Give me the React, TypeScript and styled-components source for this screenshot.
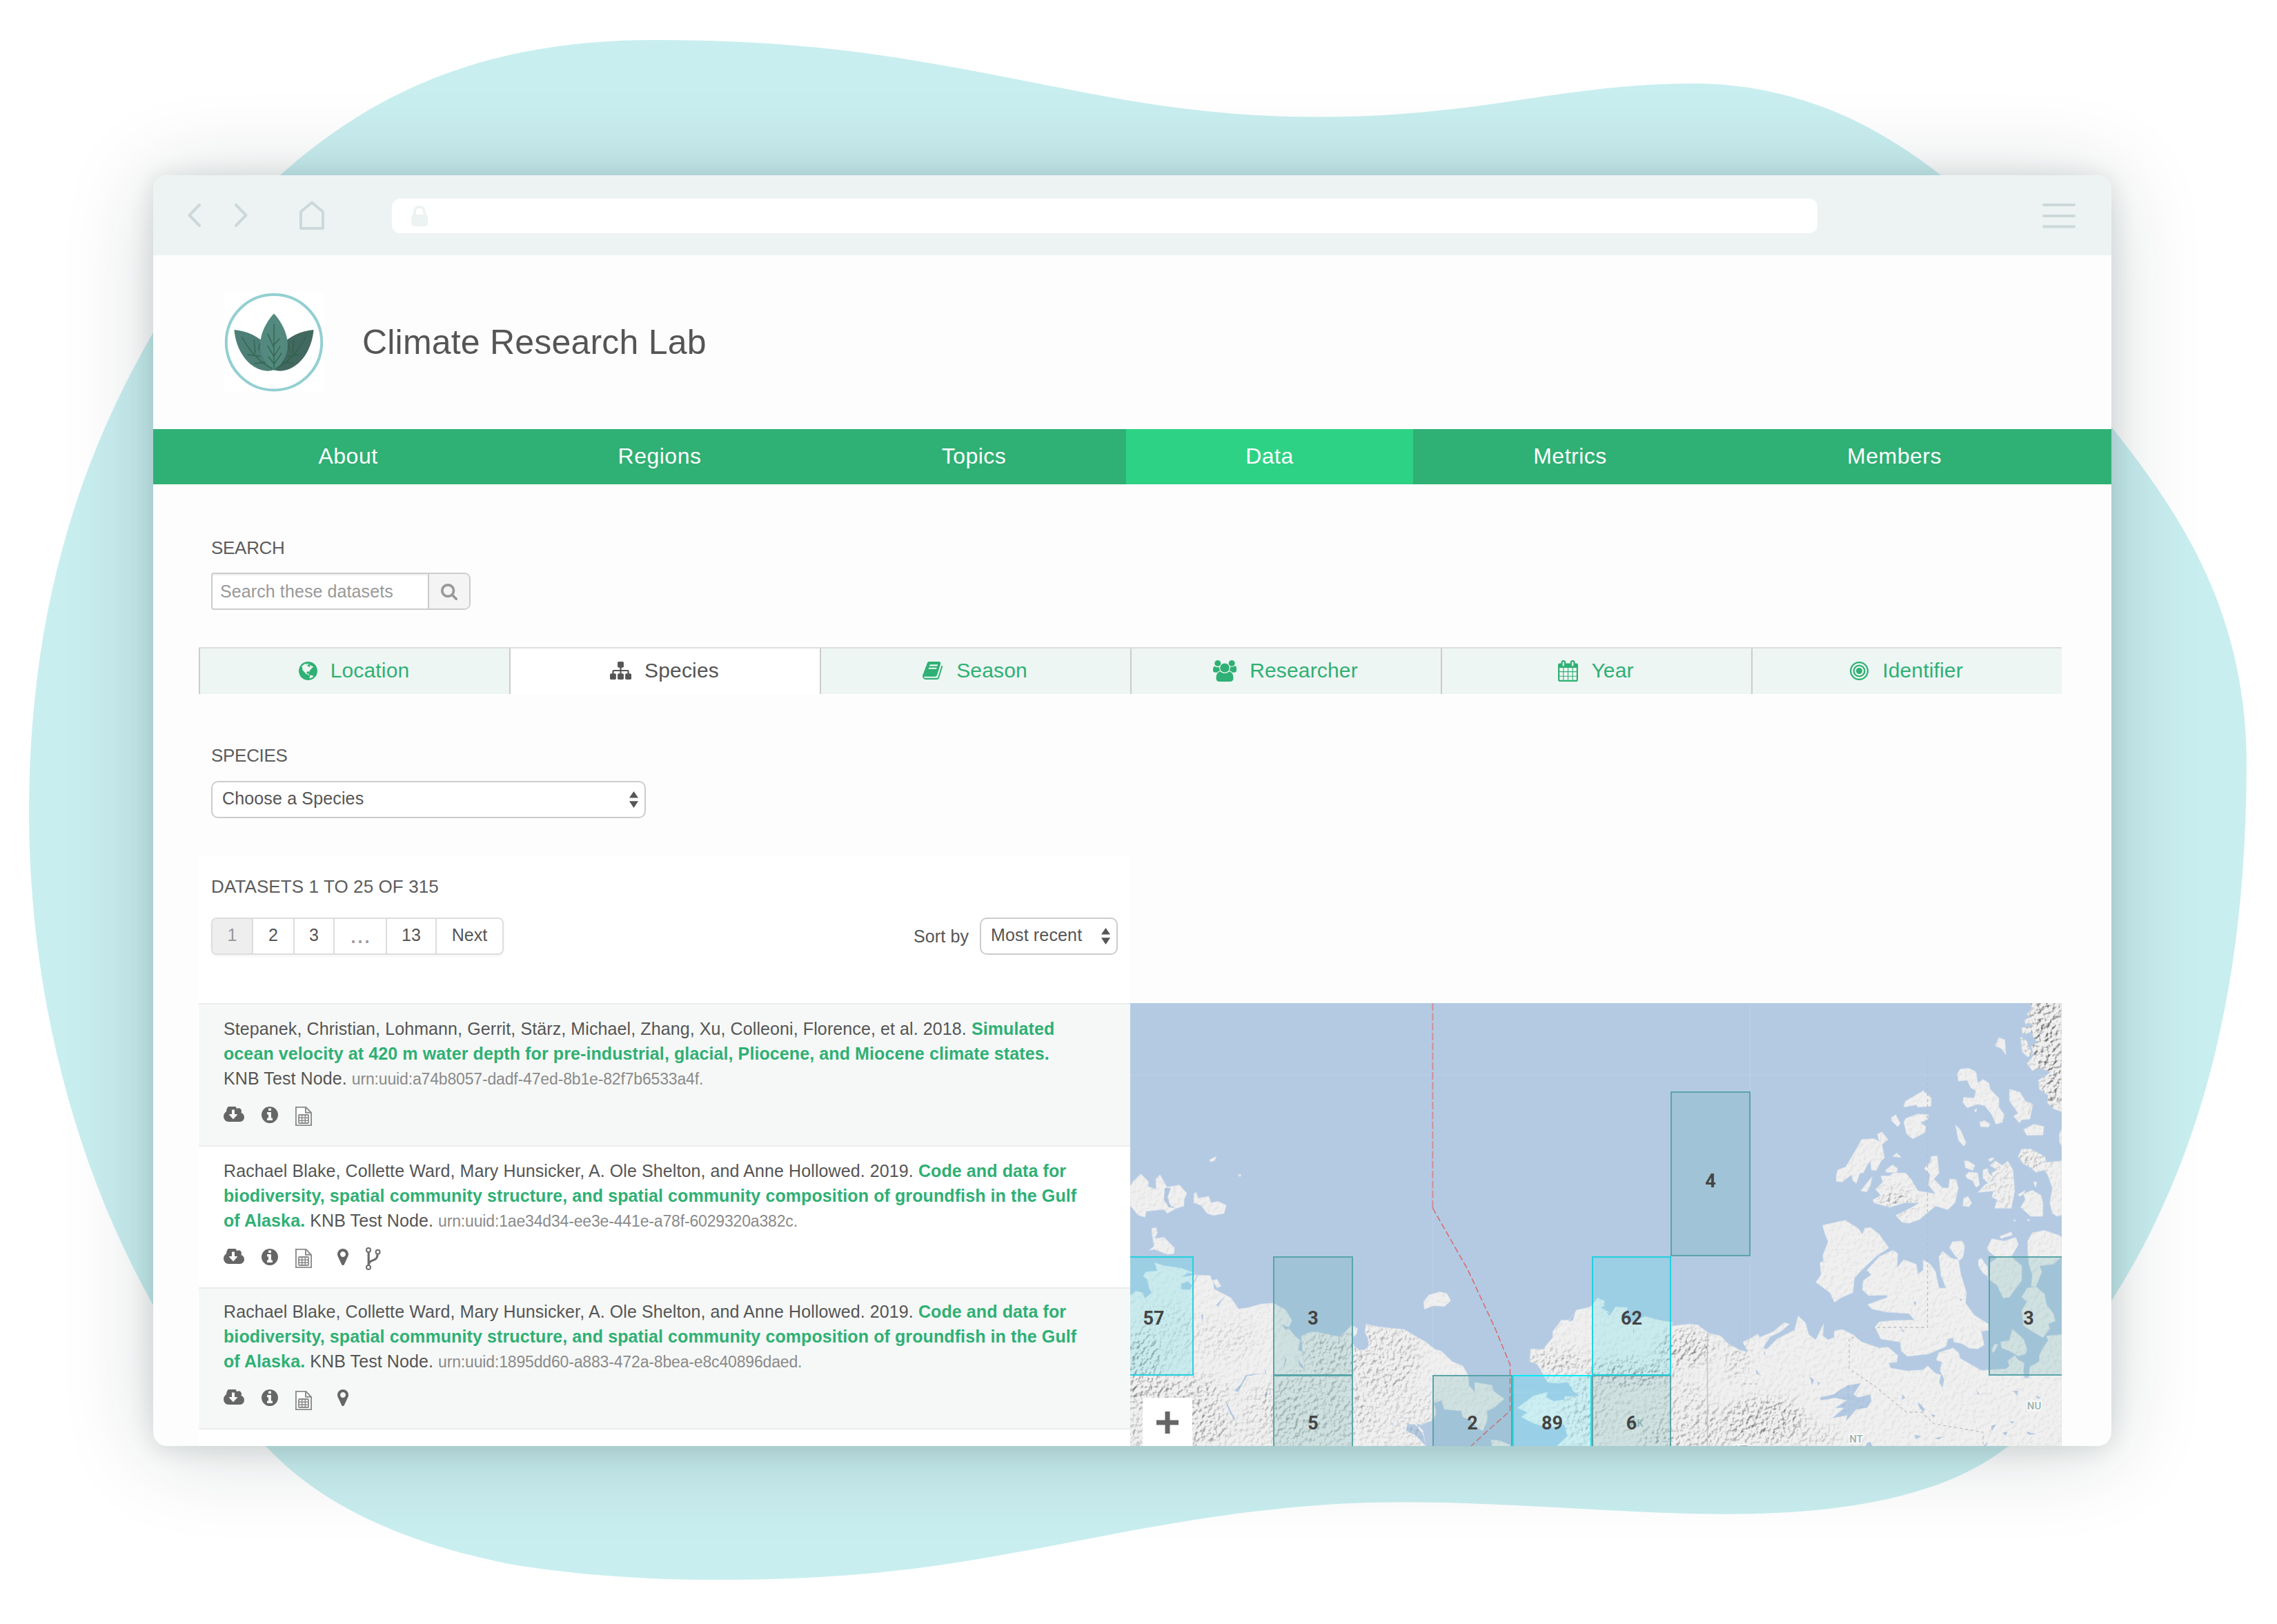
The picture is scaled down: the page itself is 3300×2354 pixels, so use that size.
import React from "react";
import styled, { createGlobalStyle } from "styled-components";

const GREEN = "#2fb074";
const TEXT = "#555555";

const Global = createGlobalStyle`
  *, *::before, *::after { box-sizing: border-box; }
  html, body { margin: 0; padding: 0; background: #fff; }
  body { font-family: "Liberation Sans", Arial, Helvetica, sans-serif; color: ${TEXT}; }
`;

/* ---------- page shell ---------- */

const Stage = styled.div`
  position: relative;
  width: 3300px;
  height: 2354px;
  padding: 254px 240px 258px 222px;
  overflow: hidden;
  background: #fff;
`;

const Backdrop = styled.svg`
  position: absolute;
  inset: 0;
  width: 3300px;
  height: 2354px;
`;

const BrowserWindow = styled.main`
  position: relative;
  width: 2838px;
  height: 1842px;
  border-radius: 20px;
  background: #fdfdfd;
  box-shadow: 0 8px 130px rgba(10, 35, 40, 0.18), 0 3px 36px rgba(10, 30, 35, 0.12);
`;

const WindowClip = styled.div`
  width: 100%;
  height: 100%;
  display: flex;
  flex-direction: column;
  border-radius: 20px;
  overflow: hidden;
`;

const Toolbar = styled.header`
  flex: none;
  height: 116px;
  padding: 0 51px 0 50px;
  display: flex;
  align-items: center;
  background: #edf3f3;
`;

const ToolbarIcon = styled.svg<{ $gap: number }>`
  flex: none;
  margin-right: ${(p) => p.$gap}px;
  fill: none;
  stroke: #ccd8da;
  stroke-width: 4;
  stroke-linecap: round;
  stroke-linejoin: round;
`;

const AddressBar = styled.div`
  width: 2066px;
  height: 50px;
  margin-right: auto;
  margin-top: 2px;
  padding-left: 28px;
  display: flex;
  align-items: center;
  border-radius: 12px;
  background: #fff;
`;

const Masthead = styled.div`
  flex: none;
  height: 252px;
  padding-left: 102px;
  display: flex;
  align-items: center;
`;

const LogoTile = styled.div`
  width: 146px;
  height: 144px;
  background: #fff;
`;

const SiteTitle = styled.h1`
  margin: 0 0 0 55px;
  font-size: 50px;
  line-height: 60px;
  font-weight: 400;
  letter-spacing: 0.2px;
`;

const Nav = styled.nav`
  flex: none;
  height: 80px;
  padding-left: 66px;
  display: flex;
  background: ${GREEN};
`;

const NavItem = styled.a<{ $width: number; $active?: boolean }>`
  width: ${(p) => p.$width}px;
  display: flex;
  align-items: center;
  justify-content: center;
  padding-bottom: 2px;
  font-size: 32px;
  letter-spacing: 0.5px;
  color: #fff;
  background: ${(p) => (p.$active ? "#2dd284" : "transparent")};
`;

const Content = styled.section`
  flex: 1;
  min-height: 0;
  padding: 77px 72px 0 66px;
`;

/* ---------- form parts ---------- */

const Caption = styled.h2<{ $top?: number; $track?: number }>`
  margin: ${(p) => p.$top ?? 0}px 0 0 18px;
  height: 30px;
  font-size: 26px;
  line-height: 30px;
  font-weight: 400;
  letter-spacing: ${(p) => p.$track ?? -0.3}px;
  text-transform: uppercase;
  color: #5c5c5c;
`;

const SearchBox = styled.div`
  width: 376px;
  height: 54px;
  margin: 21px 0 54px 18px;
  display: flex;
  border: 2px solid #ccc;
  border-radius: 4px 9px 9px 4px;
  overflow: hidden;
  background: #fff;
`;

const SearchInput = styled.div`
  width: 312px;
  padding-left: 11px;
  line-height: 50px;
  font-size: 25px;
  letter-spacing: 0.1px;
  color: #999;
  box-shadow: inset 0 2px 2px rgba(0, 0, 0, 0.07);
`;

const SearchButton = styled.div`
  flex: 1;
  display: flex;
  align-items: center;
  justify-content: center;
  padding-top: 2px;
  border-left: 2px solid #ccc;
  background: #f4f4f4;
  color: #999;
`;

const Tabs = styled.div`
  width: 2700px;
  height: 68px;
  display: grid;
  grid-template-columns: repeat(6, 450px);
  border-top: 2px solid #ddd;
`;

const Tab = styled.a<{ $active?: boolean; $gap: number }>`
  display: flex;
  align-items: center;
  justify-content: center;
  gap: ${(p) => p.$gap}px;
  padding: 0 2px 2px 0;
  border-left: 2px solid #ccc;
  font-size: 30px;
  letter-spacing: 0.15px;
  color: ${(p) => (p.$active ? TEXT : GREEN)};
  background: ${(p) => (p.$active ? "#fff" : "#eef6f3")};
`;

const Select = styled.div<{ $width: number }>`
  width: ${(p) => p.$width}px;
  height: 54px;
  padding: 0 9px 0 14px;
  display: flex;
  align-items: center;
  justify-content: space-between;
  border: 2px solid #ccc;
  border-radius: 10px;
  background: #fff;
  font-size: 25px;
`;

const SelectLabel = styled.span`
  padding-bottom: 3px;
  letter-spacing: 0.15px;
`;

const SpeciesField = styled.div`
  margin: 22px 0 54px 18px;
`;

/* ---------- results ---------- */

const Results = styled.div`
  display: grid;
  grid-template-columns: 1350px 1350px;
`;

const ListPanel = styled.div`
  height: 856px;
  padding-top: 30px;
  border-radius: 8px 8px 0 0;
  background: #fff;
`;

const ListTools = styled.div`
  height: 54px;
  margin: 30px 18px 70px;
  display: flex;
  align-items: center;
  justify-content: space-between;
`;

const Pager = styled.div`
  height: 54px;
  display: flex;
  border: 2px solid #ddd;
  border-radius: 8px;
  overflow: hidden;
  box-shadow: 0 2px 4px rgba(0, 0, 0, 0.05);
`;

const Page = styled.a<{ $width: number; $current?: boolean }>`
  width: ${(p) => p.$width}px;
  display: flex;
  align-items: center;
  justify-content: center;
  padding-bottom: 4px;
  font-size: 25px;
  color: ${(p) => (p.$current ? "#999" : TEXT)};
  background: ${(p) => (p.$current ? "#eee" : "#fff")};
  & + & { border-left: 2px solid #ddd; }
`;

const Dots = styled.span`
  font-size: 36px;
  line-height: 30px;
  color: #999;
`;

const SortBy = styled.label`
  display: flex;
  align-items: center;
  gap: 16px;
  font-size: 25px;
  letter-spacing: 0.1px;
`;

const Row = styled.article<{ $shaded?: boolean; $height: number; $pad: number }>`
  height: ${(p) => p.$height}px;
  padding: ${(p) => p.$pad}px 0 0 36px;
  border-top: 2px solid #ebeeed;
  background: ${(p) => (p.$shaded ? "#f6f8f7" : "#fff")};
`;

const Citation = styled.p`
  margin: 0;
  font-size: 25px;
  line-height: 36px;
  letter-spacing: 0.1px;
  white-space: nowrap;
`;

const Line = styled.span`
  display: block;
  height: 36px;
`;

const TitleLink = styled.a`
  font-weight: 700;
  color: ${GREEN};
`;

const Uuid = styled.span`
  font-size: 23px;
  letter-spacing: -0.16px;
  color: #8a8a8a;
`;

const Actions = styled.div`
  display: flex;
  align-items: flex-start;
  margin-top: 23px;
  color: #666;
`;

const ActionSlot = styled.span<{ $width: number; $drop?: number }>`
  width: ${(p) => p.$width}px;
  padding-top: ${(p) => p.$drop ?? 0}px;
  display: flex;
`;

const ForkSlot = styled(ActionSlot)`
  margin-top: -2px;
`;

const ListEnd = styled.div`
  height: 26px;
  border-top: 2px solid #ebeeed;
`;

/* ---------- map ---------- */

const MapFrame = styled.div`
  position: relative;
  width: 1350px;
  height: 642px;
  margin-top: 214px;
  overflow: hidden;
  background: #b4cae3;
  font-family: Roboto, "Liberation Sans", sans-serif;
`;

const MapArt = styled.svg`
  display: block;
  width: 1350px;
  height: 642px;
`;

type Tone = "teal" | "cyan" | "bright";
const toneFill = { teal: "rgba(89,169,172,.21)", cyan: "rgba(80,222,233,.24)", bright: "rgba(40,235,250,.19)" };
const toneLine = { teal: "#59a5a9", cyan: "#22d0de", bright: "#06e9f4" };

const GridCell = styled.div<{ $x: number; $y: number; $w: number; $h: number; $tone: Tone; $text: number }>`
  position: absolute;
  left: ${(p) => p.$x}px;
  top: ${(p) => p.$y}px;
  width: ${(p) => p.$w}px;
  height: ${(p) => p.$h}px;
  padding-top: ${(p) => p.$text}px;
  border: 2px solid ${(p) => toneLine[p.$tone]};
  background: ${(p) => toneFill[p.$tone]};
  text-align: center;
  font-size: 27px;
  line-height: 30px;
  font-weight: 700;
  color: #444;
`;

const ZoomIn = styled.div`
  position: absolute;
  left: 18px;
  top: 572px;
  width: 72px;
  height: 72px;
  display: flex;
  align-items: center;
  justify-content: center;
  border-radius: 4px;
  background: #fff;
`;

/* ---------- icons ---------- */

const glyphs: Record<string, { box: string; d: string }> = {
  search: {
    box: "64 128 1664 1664",
    d: "M1216 832q0-185-131.5-316.5t-316.5-131.5-316.5 131.5-131.5 316.5 131.5 316.5 316.5 131.5 316.5-131.5 131.5-316.5zm512 832q0 52-38 90t-90 38q-54 0-90-38l-343-342q-179 124-399 124-143 0-273.5-55.5t-225-150-150-225-55.5-273.5 55.5-273.5 150-225 225-150 273.5-55.5 273.5 55.5 225 150 150 225 55.5 273.5q0 220-124 399l343 343q37 37 37 90z",
  },
  globe: {
    box: "128 128 1536 1536",
    d: "M896 128q209 0 385.5 103t279.5 279.5 103 385.5-103 385.5-279.5 279.5-385.5 103-385.5-103-279.5-279.5-103-385.5 103-385.5 279.5-279.5 385.5-103zm274 521q-2 1-9.5 9.5t-13.5 9.5q2 0 4.5-5t5-11 3.5-7q6-7 22-15 14-6 52-12 34-8 51 11-2-2 9.5-13t14.5-12q3-2 15-4.5t15-7.5l2-22q-12 1-17.5-7t-6.5-21q0 2-6 8 0-7-4.5-8t-11.5 1-9 1q-10-3-15-7.5t-8-16.5-4-15q-2-5-9.5-11t-9.5-10q-1-2-2.5-5.5t-3-6.5-4-5.5-5.5-2.5-7 5-7.5 10-4.5 5q-3-2-6-1.5t-4.5 1-4.5 3-5 3.5q-3 2-8.5 3t-8.5 2q15-5-1-11-10-4-16-3 9-4 7.5-12t-8.5-14h5q-1-4-8.5-8.5t-17.5-8.5-13-6q-8-5-34-9.5t-33-.5q-5 6-4.5 10.5t4 14 3.5 12.5q1 6-5.5 13t-6.5 12q0 7 14 15.5t10 21.5q-3 8-16 16t-16 12q-5 8-1.5 18.5t10.5 16.5q2 2 1.5 4t-3.5 4.5-5.5 4-6.5 3.5l-3 2q-11 5-20.5-6t-13.5-26q-7-25-16-30-23-8-29 1-5-13-41-26-25-9-58-4 6-1 0-15-7-15-19-12 3-6 4-17.5t1-13.5q3-13 12-23 1-1 7-8.5t9.5-13.5.5-6q35 4 50-11 5-5 11.5-17t10.5-17q9-6 14-5.5t14.5 5.5 14.5 5q14 1 15.5-11t-7.5-20q12 1 3-17-4-7-8-9-12-4-27 5-8 4 2 8-1-1-9.5 10.5t-16.5 17.5-16-5q-1-1-5.5-13.5t-9.5-13.5q-8 0-16 15 3-8-11-15t-24-8q19-12-8-27-7-4-20.5-5t-19.5 4q-5 7-5.5 11.5t5 8 10.5 5.5 11.5 4 8.5 3q14 10 8 14-2 1-8.5 3.5t-11.5 4.5-6 4q-3 4 0 14t-2 14q-5-5-9-17.5t-7-16.5q7 9-25 6l-10-1q-4 0-16 2t-20.5 1-13.5-8q-4-8 0-20 1-4 4-2-4-3-11-9.5t-10-8.5q-46 15-94 41 6 1 12-1 5-2 13-6.5t10-5.5q34-14 42-7l5-5q14 16 20 25-7-4-30-1-20 6-22 12 7 12 5 18-4-3-11.5-10t-14.5-11-15-5q-16 0-22 1-146 80-235 222 7 7 12 8 4 1 5 9t2.5 11 11.5-3q9 8 3 19 1-1 44 27 19 17 21 21 3 11-10 18-1-2-9-9t-9-4q-3 5 .5 18.5t10.5 12.5q-7 0-9.5 16t-2.5 35.5-1 23.5l2 1q-3 12 5.5 34.5t21.5 19.5q-13 3 20 43 6 8 8 9 3 2 12 7.5t15 10 10 10.5q4 5 10 22.5t14 23.5q-2 6 9.5 20t10.5 23q-1 0-2.5 1t-2.5 1q3 7 15.5 14t15.5 13q1 3 2 10t3 11 8 2q2-20-24-62-15-25-17-29-3-5-5.5-15.5t-4.5-14.5q2 0 6 1.5t8.5 3.5 7.5 4 2 3q-3 7 2 17.5t12 18.5 17 19 12 13q6 6 14 19.5t0 13.5q9 0 20 10.5t17 19.5q5 8 8 26t5 24q2 7 8.5 13.5t12.5 9.5l16 8 13 7q5 2 18.5 10.5t21.5 11.5q10 4 16 4t14.5-2.5 13.5-3.5q15-2 29 15t21 21q36 19 55 11-2 1 .5 7.5t8 15.5 9 14.5 5.5 8.5q5 6 18 15t18 15q6-4 7-9-3 8 7 20t18 10q14-3 14-32-31 15-49-18 0-1-2.5-5.5t-4-8.5-2.5-8.5 0-7.5 5-3q9 0 10-3.5t-2-12.5-4-13q-1-8-11-20t-12-15q-5 9-16 8t-16-9q0 1-1.5 5.5t-1.5 6.5q-13 0-15-1 1-3 2.5-17.5t3.5-22.5q1-4 5.5-12t7.5-14.5 4-12.5-4.5-9.5-17.5-2.5q-19 1-26 20-1 3-3 10.5t-5 11.5-9 7q-7 3-24 2t-24-5q-13-8-22.5-29t-9.5-37q0-10 2.5-26.5t3-25-5.5-24.5q3-2 9-9.5t10-10.5q2-1 4.5-1.5t4.5 0 4-1.5 3-6q-1-1-4-3-3-3-4-3 7 3 28.5-1.5t27.5 1.5q15 11 22-2 0-1-2.5-9.5t-.5-13.5q5 27 29 9 3 3 15.5 5t17.5 5q3 2 7 5.5t5.5 4.5 5-.5 8.5-6.5q10 14 12 24 11 40 19 44 7 3 11 2t4.5-9.5 0-14-1.5-12.5l-1-8v-18l-1-8q-15-3-18.5-12t1.5-18.5 15-18.5q1-1 8-3.5t15.5-6.5 12.5-8q21-19 15-35 7 0 11-9-1 0-5-3t-7.5-5-4.5-2q9-5 2-16 5-3 7.5-11t7.5-10q9 12 21 2 8-8 1-16 5-7 20.5-10.5t18.5-9.5q7 2 8-2t1-12 3-12q4-5 15-9t13-5l17-11q3-4 0-4 18 2 31-11 10-11-6-20 3-6-3-9.5t-15-5.5q3-1 11.5-.5t10.5-1.5q15-10-7-16-17-5-43 12zm-163 877q206-36 351-189-3-3-12.5-4.5t-12.5-3.5q-18-7-24-8 1-7-2.5-13t-8-9-12.5-8-11-7q-2-2-7-6t-7-5.5-7.5-4.5-8.5-2-10 1l-3 1q-3 1-5.5 2.5t-5.5 3-4 3 0 2.5q-21-17-36-22-5-1-11-5.5t-10.5-7-10-1.5-11.5 7q-5 5-6 15t-2 13q-7-5 0-17.5t2-18.5q-3-6-10.5-4.5t-12 4.5-11.5 8.5-9 6.5-8.5 5.5-8.5 7.5q-3 4-6 12t-5 11q-2-4-11.5-6.5t-9.5-5.5q2 10 4 35t5 38q7 31-12 48-27 25-29 40-4 22 12 26 0 7-8 20.5t-7 21.5q0 6 2 16z",
  },
  sitemap: {
    box: "0 128 1792 1536",
    d: "M1792 1248v320q0 40-28 68t-68 28h-320q-40 0-68-28t-28-68v-320q0-40 28-68t68-28h96v-192h-512v192h96q40 0 68 28t28 68v320q0 40-28 68t-68 28h-320q-40 0-68-28t-28-68v-320q0-40 28-68t68-28h96v-192h-512v192h96q40 0 68 28t28 68v320q0 40-28 68t-68 28h-320q-40 0-68-28t-28-68v-320q0-40 28-68t68-28h96v-192q0-52 38-90t90-38h512v-192h-96q-40 0-68-28t-28-68v-320q0-40 28-68t68-28h320q40 0 68 28t28 68v320q0 40-28 68t-68 28h-96v192h512q52 0 90 38t38 90v192h96q40 0 68 28t28 68z",
  },
  book: {
    box: "64 128 1664 1536",
    d: "M1703 478q40 57 18 129l-275 906q-19 64-76.5 107.5t-122.5 43.5h-923q-77 0-148.5-53.5t-99.5-131.5q-24-67-2-127 0-4 3-27t4-37q1-8-3-21.5t-3-19.5q2-11 8-21t16.5-23.5 16.5-23.5q23-38 45-91.5t30-91.5q3-10 .5-30t-.5-28q3-11 17-28t17-23q21-36 42-92t25-90q1-9-2.5-32t.5-28q4-13 22-30.5t22-22.5q19-26 42.5-84.5t27.5-96.5q1-8-3-25.5t-2-26.5q2-8 9-18t18-23 17-21q8-12 16.5-30.5t15-35 16-36 19.5-32 26.5-23.5 36-11.5 47.5 5.5l-1 3q38-9 51-9h761q74 0 114 56t18 130l-274 906q-36 119-71.5 153.5t-128.5 34.5h-869q-27 0-38 15-11 16-1 43 24 70 144 70h923q29 0 56-15.5t35-41.5l300-987q7-22 5-57 38 15 59 43zm-1064 2q-4 13 2 22.5t20 9.5h608q13 0 25.5-9.5t16.5-22.5l21-64q4-13-2-22.5t-20-9.5h-608q-13 0-25.5 9.5t-16.5 22.5zm-83 256q-4 13 2 22.5t20 9.5h608q13 0 25.5-9.5t16.5-22.5l21-64q4-13-2-22.5t-20-9.5h-608q-13 0-25.5 9.5t-16.5 22.5z",
  },
  users: {
    box: "64 0 1920 1792",
    d: "M657 896q-162 5-265 128h-134q-82 0-138-40.5t-56-118.5q0-353 124-353 6 0 43.5 21t97.5 42.5 119 21.5q67 0 133-23-5 37-5 66 0 159 93 293zm1071 637q0 120-73 189.5t-194 69.5h-874q-121 0-194-69.5t-73-189.5q0-53 3.5-103.5t14-109 26.5-108.5 43-97.5 62-81 85.5-53.5 111.5-20q10 0 43 21.5t73 48 107 48 135 21.5 135-21.5 107-48 73-48 43-21.5q61 0 111.5 20t85.5 53.5 62 81 43 97.5 26.5 108.5 14 109 3.5 103.5zm-1024-1277q0 106-75 181t-181 75-181-75-75-181 75-181 181-75 181 75 75 181zm704 384q0 159-112.5 271.5t-271.5 112.5-271.5-112.5-112.5-271.5 112.5-271.5 271.5-112.5 271.5 112.5 112.5 271.5zm576 225q0 78-56 118.5t-138 40.5h-134q-103-123-265-128 93-134 93-293 0-29-5-66 66 23 133 23 59 0 119-21.5t97.5-42.5 43.5-21q124 0 124 353zm-128-609q0 106-75 181t-181 75-181-75-75-181 75-181 181-75 181 75 75 181z",
  },
  calendar: {
    box: "64 0 1664 1792",
    d: "M192 1664h288v-288h-288v288zm352 0h320v-288h-320v288zm-352-352h288v-320h-288v320zm352 0h320v-320h-320v320zm-352-384h288v-288h-288v288zm736 736h320v-288h-320v288zm-384-736h320v-288h-320v288zm768 736h288v-288h-288v288zm-384-352h320v-320h-320v320zm-352-864v-288q0-13-9.5-22.5t-22.5-9.5h-64q-13 0-22.5 9.5t-9.5 22.5v288q0 13 9.5 22.5t22.5 9.5h64q13 0 22.5-9.5t9.5-22.5zm736 864h288v-320h-288v320zm-384-384h320v-288h-320v288zm384 0h288v-288h-288v288zm32-480v-288q0-13-9.5-22.5t-22.5-9.5h-64q-13 0-22.5 9.5t-9.5 22.5v288q0 13 9.5 22.5t22.5 9.5h64q13 0 22.5-9.5t9.5-22.5zm384-64v1280q0 52-38 90t-90 38h-1408q-52 0-90-38t-38-90v-1280q0-52 38-90t90-38h128v-96q0-66 47-113t113-47h64q66 0 113 47t47 113v96h384v-96q0-66 47-113t113-47h64q66 0 113 47t47 113v96h128q52 0 90 38t38 90z",
  },
  download: {
    box: "-64 256 1920 1280",
    d: "M1216 928q0-14-9-23t-23-9h-224v-352q0-13-9.5-22.5t-22.5-9.5h-192q-13 0-22.5 9.5t-9.5 22.5v352h-224q-13 0-22.5 9.5t-9.5 22.5q0 14 9 23l352 352q9 9 23 9t23-9l351-351q10-12 10-24zm640 224q0 159-112.5 271.5t-271.5 112.5h-1088q-185 0-316.5-131.5t-131.5-316.5q0-130 70-240t188-165q-2-30-2-43 0-212 150-362t362-150q156 0 285.5 87t188.5 231q71-62 166-62 106 0 181 75t75 181q0 76-41 138 130 31 213.5 135.5t83.5 238.5z",
  },
  info: {
    box: "128 128 1536 1536",
    d: "M1152 1376v-160q0-14-9-23t-23-9h-96v-512q0-14-9-23t-23-9h-320q-14 0-23 9t-9 23v160q0 14 9 23t23 9h96v320h-96q-14 0-23 9t-9 23v160q0 14 9 23t23 9h448q14 0 23-9t9-23zm-128-896v-160q0-14-9-23t-23-9h-192q-14 0-23 9t-9 23v160q0 14 9 23t23 9h192q14 0 23-9t9-23zm640 416q0 209-103 385.5t-279.5 279.5-385.5 103-385.5-103-279.5-279.5-103-385.5 103-385.5 279.5-279.5 385.5-103 385.5 103 279.5 279.5 103 385.5z",
  },
  marker: {
    box: "384 128 1024 1536",
    d: "M1152 640q0-106-75-181t-181-75-181 75-75 181 75 181 181 75 181-75 75-181zm256 0q0 109-33 179l-364 774q-16 33-47.5 52t-67.5 19-67.5-19-46.5-52l-365-774q-33-70-33-179 0-212 150-362t362-150 362 150 150 362z",
  },
};

const Glyph = ({ name, w, h }: { name: string; w: number; h: number }) => (
  <svg width={w} height={h} viewBox={glyphs[name].box} fill="currentColor" preserveAspectRatio="none">
    <path d={glyphs[name].d} />
  </svg>
);

const Bullseye = () => (
  <svg width="27" height="27" viewBox="0 0 1536 1536" fill="none" stroke="currentColor" strokeWidth="128">
    <circle cx="768" cy="768" r="704" />
    <circle cx="768" cy="768" r="448" />
    <circle cx="768" cy="768" r="256" fill="currentColor" stroke="none" />
  </svg>
);

const FileTable = () => (
  <svg width="24" height="28" viewBox="0 0 24 28" fill="none" stroke="#8a8a8a" strokeWidth="1.9">
    <path d="M.9.9H15.4L23.1 9V27.1H.9z" fill="#fdfdfd" />
    <path d="M15 .9V8.8H23" />
    <rect x="5" y="12" width="14" height="12" rx="1" strokeWidth="1.8" />
    <path d="M5 16.200H19M5 20.200H19M9.700 12V24M14.300 12V24" strokeWidth="1.500" />
  </svg>
);

const Fork = () => (
  <svg width="22" height="33" viewBox="0 0 22 33" fill="none" stroke="#6c6c6c">
    <circle cx="4" cy="4" r="3" strokeWidth="2" />
    <circle cx="17.600" cy="6.800" r="3" strokeWidth="2" />
    <circle cx="4" cy="29" r="3" strokeWidth="2" />
    <path d="M4.200 7.600V25.500M17.200 10.400C16.800 17 13 18.400 9.500 19.200C6.500 20 5 21.400 4.400 24.500" strokeWidth="3.200" />
  </svg>
);

const UpDown = () => (
  <svg width="13" height="24" viewBox="0 0 13 24" fill="#555">
    <path d="M6.500 0L13 9.600H0zM6.500 24L0 14.200H13z" />
  </svg>
);

const Logo = () => (
  <svg width="146" height="144" viewBox="0 0 146 144">
    <circle cx="73" cy="72.200" r="69.200" fill="none" stroke="#93cfd1" strokeWidth="4" />
    <path d="M15.500 54C34 55.500 52 64 64 78C74 90 77 103 73 112C66 115 55 114 45 108C28 98 17 76 15.500 54Z" fill="#4d7f77" />
    <path d="M130.500 54C112 55.500 94 64 82 78C72 90 69 103 73 112C80 115 91 114 101 108C118 98 129 76 130.500 54Z" fill="#42695f" />
    <path d="M73 30.500C84 42 93 60 93 76C93 92 84 105 73 112.500C62 105 53 92 53 76C53 60 62 42 73 30.500Z" fill="#53897e" />
    <g fill="none" stroke="#2d6147" strokeWidth="1.400" strokeLinecap="round" opacity=".85">
      <path d="M73 46V112M73 80L64 60M73 76L81 67M73 93L64 77M73 93L82 78M73 103L65 93M73 104L84 88" />
      <path d="M27 65C36 82 50 100 70 110M46 88L44 69M53 92.500L35 90M60 101L45 103M51 84L52 74" />
      <path d="M119 65C110 82 96 100 76 110M100 88L102 69M93 92.500L111 90M86 101L101 103M95 84L94 74" />
    </g>
  </svg>
);

/* ---------- map drawing ---------- */

// Western half: Siberia, Wrangel Island and the Bering Strait.
const WEST = "translate(-18 -14) scale(.44643 .43368)";
const westLand = [
  "40,1010 58,995 80,1000 88,1020 110,1000 102,985 95,955 82,945 92,930 128,928 120,900 150,910 205,918 250,935 225,934 208,948 258,940 240,975 228,962 206,970 206,990 235,990 262,942 300,943 306,960 322,955 335,978 322,984 310,962 312,988 350,1008 368,1018 392,1055 425,1050 465,1038 505,1035 545,1058 565,1092 555,1115 530,1105 545,1125 555,1120 575,1145 592,1160 585,1190 600,1200 596,1145 625,1132 650,1132 720,1148 740,1130 760,1108 778,1120 775,1140 760,1150 768,1180 785,1192 800,1192 815,1178 812,1150 802,1135 806,1105 850,1115 930,1123 965,1145 1000,1165 1030,1190 1050,1195 1085,1230 1120,1245 1137,1275 1140,1310 1160,1335 1158,1300 1215,1310 1220,1330 1255,1355 1220,1385 1198,1395 1200,1425 1185,1462 1165,1450 1150,1430 1120,1415 1115,1395 1060,1390 1050,1360 1025,1370 1035,1400 1025,1425 985,1442 965,1435 990,1460 1000,1513 40,1513",
  "40,645 50,628 75,603 100,630 98,645 125,655 123,620 137,606 160,648 200,640 224,668 215,690 215,710 190,718 160,735 150,722 92,728 88,748 65,740 40,708",
  "247,670 255,665 260,685 295,678 303,700 325,695 352,708 345,735 310,742 290,735 270,708 247,700",
  "110,785 125,783 128,800 120,820 150,815 184,850 182,870 160,872 120,855 102,858 118,845 112,808",
  "298,556 320,545 315,558 300,563",
  "390,605 400,605 397,613",
  "993,1030 1010,1008 1045,997 1068,1003 1081,1027 1060,1046 1025,1044 995,1055",
  "1568,1028 1545,1046 1490,1058 1465,1092 1440,1092 1412,1130 1412,1150 1380,1190 1340,1188 1337,1230 1362,1240 1375,1262 1395,1300 1430,1303 1460,1298 1480,1330 1500,1345 1450,1348 1452,1358 1415,1363 1390,1350 1395,1333 1350,1345 1298,1385 1330,1400 1310,1415 1345,1435 1400,1452 1450,1440 1460,1480 1425,1513 1568,1513",
  "1212,1492 1240,1495 1275,1510 1270,1513 1215,1513",
];
const westWater = [
  "152,650 172,650 162,680 170,708 188,718 165,714 150,690",
  "1455,1312 1475,1315 1470,1338 1445,1334 1425,1325 1445,1322",
  "1485,1065 1478,1092 1462,1098",
  "270,1075 278,1072 275,1100",
  "350,1010 325,1045 318,1043",
  "415,1275 482,1268 420,1279 390,1332 378,1328 400,1305",
  "348,1360 360,1380 388,1438 365,1405",
  "475,1248 483,1275 478,1270",
  "548,1225 535,1260 545,1215",
  "585,1222 608,1258 590,1245",
  "940,1440 965,1440 990,1472 1000,1513 965,1475 935,1462",
  "885,1425 900,1452 890,1440",
  "925,1418 955,1418 930,1421",
  "490,1312 480,1355 478,1340",
];

// Eastern half: Alaska, Yukon and the Canadian Arctic islands.
const EAST = "translate(662 -14) scale(.5102 .43368)";
const eastLand = [
  "-3,1053 12,1045 30,1018 50,1028 48,1045 38,1050 70,1070 80,1048 115,1050 110,1068 95,1075 125,1100 165,1080 205,1092 243,1100 240,1112 290,1105 315,1108 345,1135 380,1145 400,1170 430,1190 458,1200 443,1165 470,1150 485,1138 490,1150 530,1130 560,1100 575,1105 550,1130 520,1148 500,1185 510,1190 540,1155 590,1125 600,1078 620,1100 630,1140 650,1158 672,1105 670,1145 685,1158 702,1150 703,1128 725,1123 755,1140 780,1165 830,1185 855,1182 883,1210 880,1232 857,1235 862,1252 910,1262 955,1258 968,1245 990,1270 1005,1275 1000,1300 1010,1318 1015,1290 1003,1260 1008,1232 992,1225 1000,1200 1040,1185 1055,1200 1060,1220 1090,1240 1120,1260 1150,1258 1200,1270 1240,1265 1243,1287 1255,1285 1258,1248 1285,1230 1285,1210 1295,1185 1310,1160 1305,1145 1348,1140 1348,1513 -3,1513",
  "1250,985 1275,980 1300,1005 1305,1040 1325,1070 1330,1095 1310,1105 1315,1120 1295,1150 1265,1130 1240,1110 1235,1060 1250,1030 1235,1015",
  "1252,860 1252,828 1265,800 1300,792 1340,808 1348,815 1348,880 1325,905 1285,910 1292,930 1275,980 1262,978 1265,940 1255,905",
  "1137,850 1150,820 1185,828 1218,815 1225,840 1205,880 1235,910 1235,960 1215,990 1200,1015 1182,1018 1165,975 1140,955 1145,900 1165,885 1140,860",
  "1172,812 1205,797 1208,808 1185,815 1178,820",
  "1112,890 1120,885 1138,915 1138,945 1125,935 1112,910",
  "1175,1165 1200,1160 1208,1122 1240,1155 1250,1190 1245,1205 1225,1212 1200,1195 1178,1185",
  "1150,1190 1158,1172 1168,1172 1158,1195 1152,1200",
  "1195,1228 1215,1210 1225,1225 1242,1235 1238,1275 1200,1270 1145,1258 1190,1255 1200,1245",
  "669,775 733,758 770,785 783,805 788,785 805,782 830,805 857,850 820,880 780,925 760,950 755,1000 725,1015 703,1032 690,1000 650,965 665,940 662,900 672,895 670,875 685,830 675,800",
  "795,925 830,880 870,858 883,870 880,918 900,890 935,905 940,938 955,925 955,890 975,905 990,930 1000,985 1020,985 1005,940 1000,880 1010,862 1035,885 1055,890 1062,940 1078,1000 1075,1035 1100,1075 1140,1105 1142,1125 1120,1130 1128,1175 1110,1188 1085,1185 1065,1170 1042,1165 1040,1150 1025,1155 1020,1180 970,1205 910,1213 893,1195 890,1165 835,1155 818,1115 830,1098 870,1093 930,1092 915,1070 850,1065 810,1055 797,1040 855,1015 850,1008 800,1010 782,990 785,960 808,940",
  "1030,850 1038,830 1065,827 1073,845 1068,880 1058,893 1045,875",
  "820,655 840,630 835,610 858,610 870,600 905,600 920,620 940,660 990,670 970,640 975,605 958,585 975,565 978,545 995,543 1000,600 985,620 1010,650 1028,650 1030,620 1048,622 1055,650 1045,700 1025,723 990,710 965,735 945,755 915,768 895,765 877,742 915,720 945,700 900,700 860,715 815,700 812,690 835,675",
  "848,590 868,573 882,585 880,598 850,598",
  "708,610 712,590 735,580 765,520 780,488 815,485 830,495 825,470 838,463 855,488 838,505 845,550 835,560 822,592 808,590 805,560 795,575 785,600 775,600 765,635 755,625 752,605 725,630 708,628",
  "777,660 810,612 805,640 795,663",
  "868,545 880,533 893,548",
  "900,375 905,360 955,325 978,350 977,377 940,380 935,372 902,380",
  "865,415 877,405 890,435 882,445 865,425",
  "900,430 905,418 940,403 970,405 968,420 948,432 962,445 960,465 925,486 908,470",
  "1047,440 1060,455 1077,500 1070,510 1055,490",
  "1052,270 1060,253 1085,250 1105,262 1110,300 1125,287 1142,300 1145,320 1170,350 1170,380 1185,405 1180,430 1162,437 1150,405 1130,375 1110,370 1080,382 1068,365 1070,347 1100,350 1105,325 1090,315 1080,290 1055,293",
  "1100,390 1107,385 1105,398",
  "1115,430 1130,425 1145,437 1140,447 1118,445",
  "1160,175 1170,147 1187,155 1190,205 1178,185",
  "1200,320 1230,330 1245,360 1267,370 1262,395 1258,420 1235,422 1228,433 1212,410 1225,400 1200,360",
  "1240,455 1270,437 1298,445 1295,473 1250,475",
  "1348,455 1342,470 1342,495 1348,510",
  "1257,32 1265,48 1250,70 1260,80 1243,88 1246,105 1262,100 1268,110 1235,115 1238,138 1262,128 1268,145 1280,165 1262,175 1268,200 1252,212 1236,195 1232,145 1250,160 1256,185 1270,205 1250,235 1265,258 1290,250 1318,262 1300,278 1282,290 1285,320 1310,340 1308,365 1325,385 1348,395 1348,32",
  "1150,680 1155,660 1110,665 1130,640 1155,625 1150,600 1165,590 1145,575 1160,560 1180,575 1195,560 1210,590 1215,660 1208,700 1205,718 1158,718 1165,690",
  "1072,560 1082,560 1102,575 1095,592 1075,582",
  "1075,608 1085,597 1110,600 1115,640 1105,648 1095,625 1080,618",
  "1125,590 1138,585 1140,600 1155,615 1140,635 1125,618",
  "1070,685 1082,678 1093,700 1085,713 1068,710",
  "1140,555 1150,549 1157,552 1145,562",
  "1232,715 1245,690 1240,670 1265,658 1290,675 1295,700 1295,745 1260,745",
  "1225,545 1235,520 1260,520 1300,545 1305,565 1348,560 1348,740 1335,745 1322,735 1315,700 1322,650 1310,610 1300,590 1275,598 1258,580 1240,570",
  "1225,672 1245,658 1240,672 1228,678",
  "1268,630 1278,630 1274,648",
  "1250,755 1258,757 1254,762",
  "1212,757 1217,757 1215,763",
];
const eastWater = [
  "662,1350 700,1340 740,1310 778,1303 757,1340 770,1350 805,1340 808,1362 795,1385 765,1390 735,1430 740,1410 696,1420 730,1385 705,1385 738,1360 705,1352 665,1360",
  "918,1050 925,1025 920,1042",
  "928,1030 936,1032 932,1045",
  "893,1120 902,1130 896,1132",
  "1058,1020 1064,1022 1062,1030",
  "478,1255 495,1280 482,1270",
  "632,1280 645,1292 640,1310",
  "655,1298 662,1300 658,1312",
  "940,1365 960,1390 955,1400 942,1380",
  "895,1340 905,1352 895,1358",
  "1105,1322 1116,1342 1110,1340",
  "1210,1328 1225,1328 1222,1345",
  "975,1405 990,1410 985,1418",
  "930,1475 950,1480 935,1490",
  "985,1488 1015,1480 1000,1490",
  "1148,1445 1162,1440 1150,1462",
  "1180,1468 1195,1465 1190,1478",
  "1248,1465 1276,1472 1255,1475",
  "1200,1430 1215,1430 1208,1438",
  "1275,1345 1290,1350 1280,1355",
  "795,1502 805,1498 810,1513 792,1513",
  "1140,1500 1125,1513 1132,1513",
  "510,1162 512,1180 506,1176",
  "503,1190 508,1212 503,1205",
  "297,1105 297,1130 294,1118",
  "133,1112 134,1138 131,1130",
  "55,1065 68,1068 65,1078",
];

// Soft patches where relief shading is strongest: cx, cy, rx, ry, strength.
const relief: [number, number, number, number, number][] = [
  [15, 530, 30, 50, 0.8], [75, 565, 70, 22, 0.7], [95, 615, 50, 35, 0.7], [10, 600, 30, 50, 0.5], [50, 480, 45, 40, 0.25], [140, 490, 50, 30, 0.2],
  [270, 590, 80, 55, 0.45], [290, 505, 40, 30, 0.55], [200, 600, 50, 50, 0.25], [370, 515, 50, 50, 0.5], [390, 600, 60, 50, 0.25],
  [615, 520, 50, 18, 0.6], [655, 590, 30, 50, 0.35], [725, 536, 65, 18, 0.9], [700, 600, 50, 40, 0.15], [805, 500, 40, 26, 0.85],
  [800, 600, 50, 50, 0.35], [880, 515, 14, 36, 0.55], [920, 605, 60, 32, 0.9], [850, 620, 50, 30, 0.4], [990, 630, 40, 20, 0.3],
  [770, 634, 30, 12, 0.8],
  [1110, 285, 24, 16, 0.7], [1325, 40, 26, 60, 1.2], [1340, 110, 14, 40, 1.2], [1310, 225, 26, 20, 0.5],
  [1265, 265, 26, 40, 0.2], [1325, 145, 24, 24, 0.5],
];

const polys = (list: string[]) => list.map((p) => <polygon key={p} points={p} />);

const Terrain = () => (
  <MapArt viewBox="0 0 1350 642">
    <defs>
      <g id="land">
        <g transform={WEST}>{polys(westLand)}</g>
        <g transform={EAST}>{polys(eastLand)}</g>
      </g>
      <mask id="landOnly" maskUnits="userSpaceOnUse" x="0" y="0" width="1350" height="642">
        <use href="#land" fill="#fff" />
      </mask>
      <filter id="soften" x="-30%" y="-30%" width="160%" height="160%">
        <feGaussianBlur stdDeviation="9" />
      </filter>
      <mask id="peaks" maskUnits="userSpaceOnUse" x="0" y="0" width="1350" height="642">
        <rect width="1350" height="642" fill="#fff" opacity=".09" />
        <g filter="url(#soften)" fill="#fff">
          {relief.map(([x, y, rx, ry, o]) => (
            <ellipse key={`${x}-${y}`} cx={x} cy={y} rx={rx} ry={ry} opacity={Math.min(1, o * 0.85)} />
          ))}
        </g>
      </mask>
      <filter id="hillshade" x="0" y="0" width="100%" height="100%" colorInterpolationFilters="sRGB">
        <feTurbulence type="fractalNoise" baseFrequency=".17 .15" numOctaves="2" seed="7" />
        <feColorMatrix values="0 0 0 0 0  0 0 0 0 0  0 0 0 0 0  1 0 0 0 0" />
        <feDiffuseLighting surfaceScale="4" diffuseConstant="1" lightingColor="#fff">
          <feDistantLight azimuth="225" elevation="52" />
        </feDiffuseLighting>
        <feColorMatrix values="0 0 0 0 .4  0 0 0 0 .4  0 0 0 0 .4  -1.5 0 0 0 1.16" />
      </filter>
    </defs>
    <use href="#land" fill="#f0f0f0" stroke="#dfe5ec" strokeWidth="1.500" />
    <g fill="#b4cae3">
      <g transform={WEST}>{polys(westWater)}</g>
      <g transform={EAST}>{polys(eastWater)}</g>
    </g>
    <g mask="url(#landOnly)">
      <g mask="url(#peaks)">
        <rect width="1350" height="642" filter="url(#hillshade)" />
      </g>
    </g>
    <g stroke="#fff" strokeOpacity=".12" strokeWidth="1">
      <path d="M0 104H1350M0 564H1350M438.500 297V642M898.500 0V642" />
    </g>
    <g fill="none" stroke="#bfbfbf" strokeWidth="1.300" strokeDasharray="4 4">
      <path d="M1155.500 83V470H1085L1051 484L1042 486V530L1080 556L1125 593H1147L1165 610L1236 622V642" />
      <path d="M883 456V502M889 552H911" />
    </g>
    <path d="M836.500 478V642" stroke="#c2c2c2" strokeWidth="1.500" />
    <path d="M438.300 0V297" stroke="#d3919d" strokeWidth="2.200" strokeDasharray="11 3.300" fill="none" />
    <path d="M438.300 297L489 386L529 472L550.500 524V591L509 628L494 642" stroke="#dd6668" strokeWidth="1.500" strokeDasharray="9 4" fill="none" />
    <g fontSize="15" fontWeight="500" fill="#9bb3ae" stroke="#fafafa" strokeWidth="4" paintOrder="stroke" textAnchor="middle" strokeLinejoin="round">
      <text x="1310" y="589">NU</text>
      <text x="1052" y="637">NT</text>
      <text x="886" y="652">YT</text>
      <text x="734" y="614" stroke="none">AK</text>
    </g>
  </MapArt>
);

/* ---------- data ---------- */

const navItems = [
  { label: "About", width: 433 },
  { label: "Regions", width: 470 },
  { label: "Topics", width: 441 },
  { label: "Data", width: 416, active: true },
  { label: "Metrics", width: 455 },
  { label: "Members", width: 485 },
];

const tabs = [
  { label: "Location", gap: 19, icon: <Glyph name="globe" w={27} h={27} /> },
  { label: "Species", gap: 19, icon: <Glyph name="sitemap" w={31} h={26} />, active: true },
  { label: "Season", gap: 20, icon: <Glyph name="book" w={29} h={26} /> },
  { label: "Researcher", gap: 19, icon: <Glyph name="users" w={34} h={31} /> },
  { label: "Year", gap: 19, icon: <Glyph name="calendar" w={29} h={31} /> },
  { label: "Identifier", gap: 20, icon: <Bullseye /> },
];

const pages = [
  { label: "1", width: 57, current: true },
  { label: "2", width: 60 },
  { label: "3", width: 58 },
  { label: "...", width: 76 },
  { label: "13", width: 72 },
  { label: "Next", width: 97 },
];

const groundfish = {
  authors: "Rachael Blake, Collette Ward, Mary Hunsicker, A. Ole Shelton, and Anne Hollowed. 2019. ",
  lines: ["Code and data for", "biodiversity, spatial community structure, and spatial community composition of groundfish in the Gulf", "of Alaska."],
};

const cells: { n: string; x: number; y: number; w: number; h: number; tone: Tone; text: number }[] = [
  { n: "3", x: 207, y: 367, w: 116, h: 173, tone: "teal", text: 73 },
  { n: "5", x: 207, y: 539, w: 116, h: 110, tone: "teal", text: 53 },
  { n: "57", x: -24, y: 367, w: 116, h: 173, tone: "cyan", text: 73 },
  { n: "2", x: 438, y: 539, w: 116, h: 110, tone: "teal", text: 53 },
  { n: "6", x: 669, y: 539, w: 115, h: 110, tone: "teal", text: 53 },
  { n: "89", x: 554, y: 539, w: 115, h: 110, tone: "bright", text: 53 },
  { n: "62", x: 669, y: 367, w: 115, h: 173, tone: "cyan", text: 73 },
  { n: "4", x: 783, y: 128, w: 116, h: 239, tone: "teal", text: 113 },
  { n: "3", x: 1244, y: 367, w: 116, h: 173, tone: "teal", text: 73 },
];

const RowActions = ({ place, fork, drop }: { place?: boolean; fork?: boolean; drop?: number }) => (
  <Actions>
    <ActionSlot $width={55}><Glyph name="download" w={30} h={22} /></ActionSlot>
    <ActionSlot $width={49}><Glyph name="info" w={24} h={24} /></ActionSlot>
    <ActionSlot $width={61} $drop={drop}><FileTable /></ActionSlot>
    {place && <ActionSlot $width={41}><Glyph name="marker" w={16} h={24} /></ActionSlot>}
    {fork && <ForkSlot $width={30}><Fork /></ForkSlot>}
  </Actions>
);

export default function App() {
  return (
    <Stage>
      <Global />
      <Backdrop viewBox="0 0 1568 1118.500">
        <path
          fill="#c9eef0"
          d="M192 121.500C260 60 340 27.500 450 27.500C590 27.500 660 48 770 68C860 84 940 84 1025 72C1075 65 1115 57.500 1165 57.500C1235 57.500 1290 84 1337 121C1390 170 1400 235 1454 294C1500 352 1547 420 1547 526C1547 655 1525 785 1454 896C1436 940 1410 972 1383 996C1325 1042 1225 1045 1150 1042C1070 1039 1010 1033 940 1035C825 1039 740 1065 640 1079C560 1090 440 1093 350 1077C265 1060 215 1030 183 996C155 970 128 936 105 898C50 800 20 680 20 560C20 430 50 325 105 230C128 185 155 150 192 121.500Z"
        />
      </Backdrop>
      <BrowserWindow>
        <WindowClip>
          <Toolbar>
            <ToolbarIcon $gap={48} width="20" height="34" viewBox="0 0 20 34"><path d="M17 2L2.500 17L17 32" /></ToolbarIcon>
            <ToolbarIcon $gap={74} width="20" height="34" viewBox="0 0 20 34"><path d="M2 2L16.500 17L2 32" /></ToolbarIcon>
            <ToolbarIcon $gap={98} width="36" height="44" viewBox="0 0 36 44"><path d="M18 3.500L34 17V41H2V17Z" /></ToolbarIcon>
            <AddressBar>
              <svg width="24" height="30" viewBox="0 0 24 30">
                <path d="M5 16V9.500Q5 2 12 2T19 9.500V16" fill="none" stroke="#edf3f3" strokeWidth="4" />
                <rect y="13" width="24" height="17" rx="4" fill="#edf3f3" />
              </svg>
            </AddressBar>
            <ToolbarIcon $gap={0} width="50" height="38" viewBox="0 0 50 38"><path d="M3 4H47M3 20H47M3 35.500H47" /></ToolbarIcon>
          </Toolbar>
          <Masthead>
            <LogoTile><Logo /></LogoTile>
            <SiteTitle>Climate Research Lab</SiteTitle>
          </Masthead>
          <Nav>
            {navItems.map((n) => (
              <NavItem key={n.label} $width={n.width} $active={n.active}>{n.label}</NavItem>
            ))}
          </Nav>
          <Content>
            <Caption>Search</Caption>
            <SearchBox>
              <SearchInput>Search these datasets</SearchInput>
              <SearchButton><Glyph name="search" w={24} h={24} /></SearchButton>
            </SearchBox>
            <Tabs>
              {tabs.map((t) => (
                <Tab key={t.label} $active={t.active} $gap={t.gap}>{t.icon}{t.label}</Tab>
              ))}
            </Tabs>
            <Caption $top={74}>Species</Caption>
            <SpeciesField>
              <Select $width={630}><SelectLabel>Choose a Species</SelectLabel><UpDown /></Select>
            </SpeciesField>
            <Results>
              <ListPanel>
                <Caption $track={0.1}>Datasets 1 to 25 of 315</Caption>
                <ListTools>
                  <Pager>
                    {pages.map((p) => (
                      <Page key={p.label} $width={p.width} $current={p.current}>
                        {p.label === "..." ? <Dots>...</Dots> : p.label}
                      </Page>
                    ))}
                  </Pager>
                  <SortBy>
                    Sort by
                    <Select $width={200}><SelectLabel>Most recent</SelectLabel><UpDown /></Select>
                  </SortBy>
                </ListTools>
                <Row $shaded $height={206} $pad={17}>
                  <Citation>
                    <Line>Stepanek, Christian, Lohmann, Gerrit, Stärz, Michael, Zhang, Xu, Colleoni, Florence, et al. 2018. <TitleLink>Simulated</TitleLink></Line>
                    <Line><TitleLink>ocean velocity at 420 m water depth for pre-industrial, glacial, Pliocene, and Miocene climate states.</TitleLink></Line>
                    <Line>KNB Test Node. <Uuid>urn:uuid:a74b8057-dadf-47ed-8b1e-82f7b6533a4f.</Uuid></Line>
                  </Citation>
                  <RowActions />
                </Row>
                <Row $height={206} $pad={17}>
                  <Citation>
                    <Line>{groundfish.authors}<TitleLink>{groundfish.lines[0]}</TitleLink></Line>
                    <Line><TitleLink>{groundfish.lines[1]}</TitleLink></Line>
                    <Line><TitleLink>{groundfish.lines[2]}</TitleLink> KNB Test Node. <Uuid>urn:uuid:1ae34d34-ee3e-441e-a78f-6029320a382c.</Uuid></Line>
                  </Citation>
                  <RowActions place fork />
                </Row>
                <Row $shaded $height={204} $pad={15}>
                  <Citation>
                    <Line>{groundfish.authors}<TitleLink>{groundfish.lines[0]}</TitleLink></Line>
                    <Line><TitleLink>{groundfish.lines[1]}</TitleLink></Line>
                    <Line><TitleLink>{groundfish.lines[2]}</TitleLink> KNB Test Node. <Uuid>urn:uuid:1895dd60-a883-472a-8bea-e8c40896daed.</Uuid></Line>
                  </Citation>
                  <RowActions place drop={2} />
                </Row>
                <ListEnd />
              </ListPanel>
              <MapFrame>
                <Terrain />
                {cells.map((c) => (
                  <GridCell key={`${c.n}-${c.x}`} $x={c.x} $y={c.y} $w={c.w} $h={c.h} $tone={c.tone} $text={c.text}>{c.n}</GridCell>
                ))}
                <ZoomIn>
                  <svg width="32" height="32" viewBox="0 0 32 32"><path d="M16 0V32M0 16H32" stroke="#666" strokeWidth="7" /></svg>
                </ZoomIn>
              </MapFrame>
            </Results>
          </Content>
        </WindowClip>
      </BrowserWindow>
    </Stage>
  );
}
